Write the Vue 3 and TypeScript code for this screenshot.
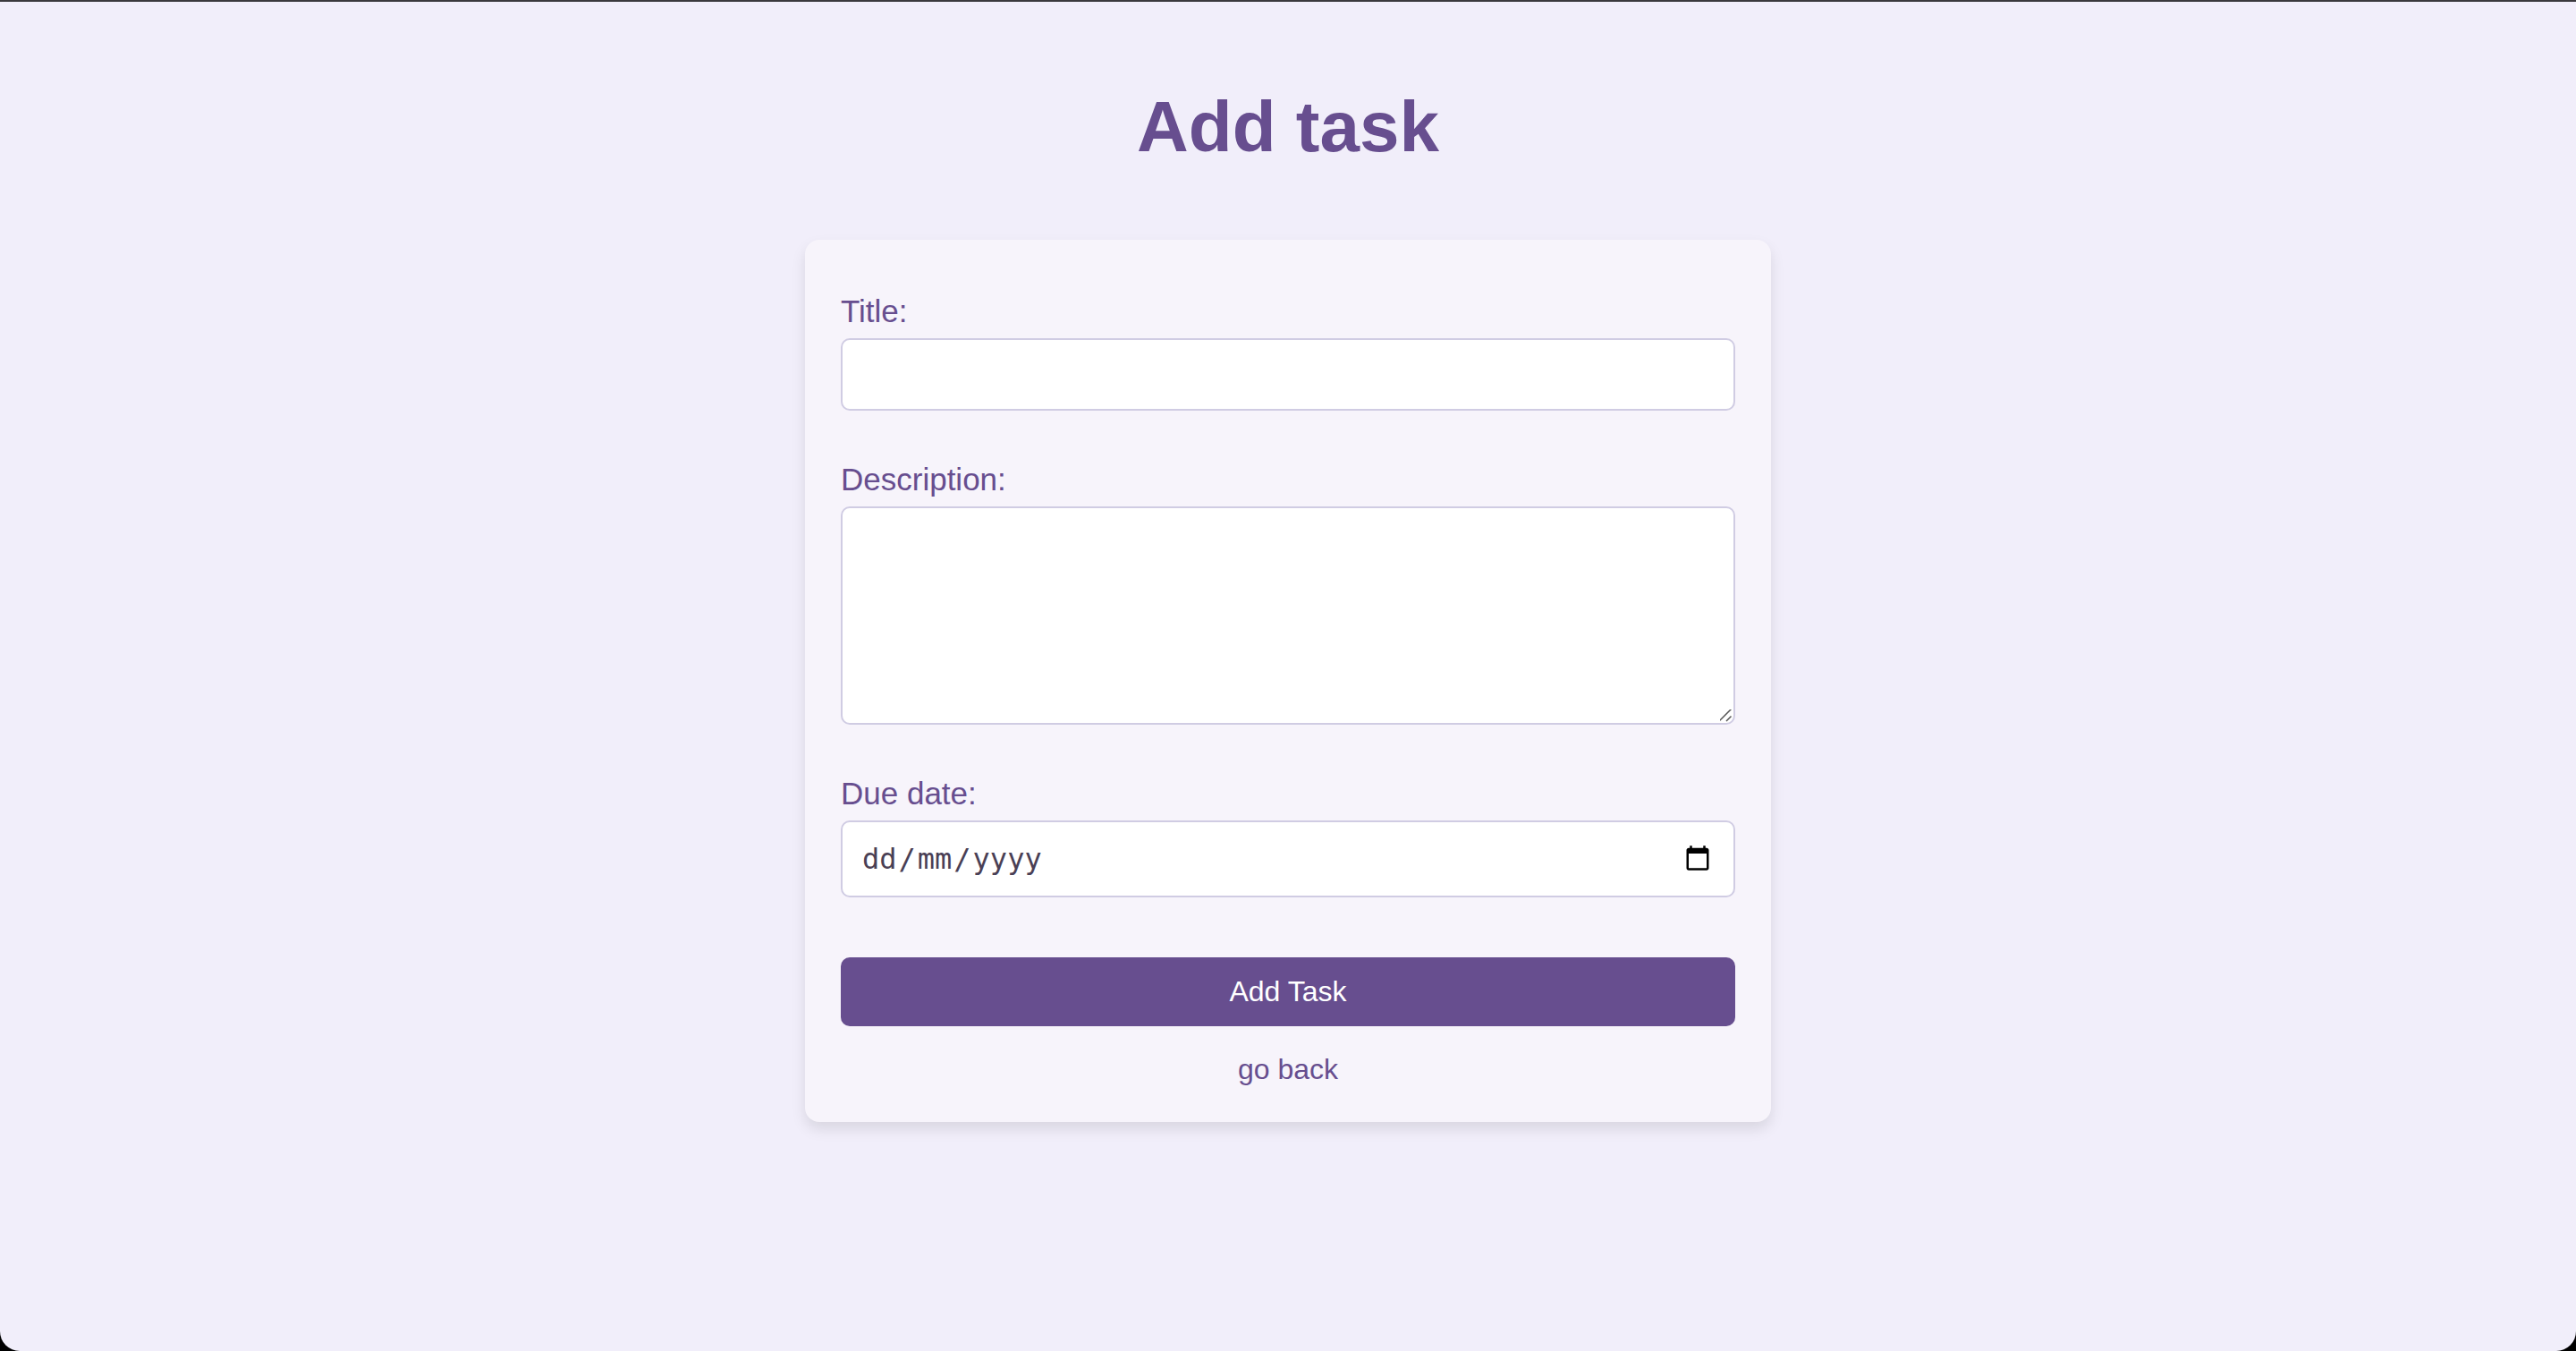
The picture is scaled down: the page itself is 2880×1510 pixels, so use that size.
<script setup lang="ts">
import { ref } from 'vue'

const title = ref('')
const description = ref('')
const dueDate = ref('')

function addTask(): void {
  title.value = ''
  description.value = ''
  dueDate.value = ''
}
</script>

<template>
  <main class="page">
    <h1 class="heading">Add task</h1>
    <form class="card" @submit.prevent="addTask">
      <div class="field">
        <label for="title">Title:</label>
        <input id="title" v-model="title" class="control" type="text" />
      </div>
      <div class="field">
        <label for="description">Description:</label>
        <textarea id="description" v-model="description" class="control area"></textarea>
      </div>
      <div class="field">
        <label for="due">Due date:</label>
        <div class="date-box">
          <input
            id="due"
            v-model="dueDate"
            class="control date"
            :class="{ empty: !dueDate }"
            type="date"
          />
          <span v-if="!dueDate" class="hint" aria-hidden="true"><span>dd</span><span>/</span><span>mm</span><span>/</span><span>yyyy</span></span>
        </div>
      </div>
      <button class="submit" type="submit">Add Task</button>
      <a class="back" href="#">go back</a>
    </form>
  </main>
</template>

<style>
body {
  margin: 0;
  background: #000;
}
</style>

<style scoped>
.page {
  box-sizing: border-box;
  min-height: 100vh;
  padding: 93px 40px 40px;
  display: flex;
  flex-direction: column;
  align-items: center;
  gap: 79px;
  border-top: 2px solid #3a393d;
  border-radius: 0 0 22px 22px;
  background: #f1eefa;
  color: #674e8f;
  font-family: "Liberation Sans", Arial, sans-serif;
}

.heading {
  margin: 0;
  font-size: 80px;
  line-height: 94px;
  font-weight: 700;
}

.card {
  box-sizing: border-box;
  width: 100%;
  max-width: 1080px;
  padding: 60px 40px 40px;
  display: flex;
  flex-direction: column;
  border-radius: 16px;
  background: #f7f4fb;
  box-shadow: 0 8px 16px rgba(0, 0, 0, 0.1);
}

.field {
  display: flex;
  flex-direction: column;
  gap: 10px;
  margin-bottom: 57px;
}

.field label {
  font-size: 35px;
  line-height: 40px;
}

.control {
  box-sizing: border-box;
  display: block;
  width: 100%;
  height: 81px;
  margin: 0;
  padding: 20px;
  border: 2px solid #d0cce3;
  border-radius: 10px;
  outline: none;
  background: #fff;
  color: #4a3f55;
  font-family: "Liberation Sans", Arial, sans-serif;
  font-size: 32px;
}

.control:focus {
  border-color: #674e8f;
}

.area {
  height: 244px;
  resize: vertical;
}

.area::-webkit-scrollbar {
  width: 20px;
  height: 20px;
}

.area::-webkit-resizer {
  background: url("data:image/svg+xml,%3Csvg xmlns='http://www.w3.org/2000/svg' width='20' height='20' viewBox='0 0 20 20'%3E%3Cpath d='M4 18L17.500 4.500M12 18L17.500 12.500' stroke='%23555' stroke-width='1.500'/%3E%3C/svg%3E") right bottom no-repeat;
}

.date-box {
  position: relative;
}

.date {
  height: 86px;
  padding-right: 22px;
  font-family: "DejaVu Sans Mono", monospace;
}

.date.empty::-webkit-datetime-edit {
  opacity: 0;
}

.hint {
  position: absolute;
  inset: 0 auto 0 24px;
  display: flex;
  align-items: center;
  gap: 2px;
  color: #4a3f55;
  font-family: "DejaVu Sans Mono", monospace;
  font-size: 32px;
  pointer-events: none;
}

.submit {
  margin: 10px 0 29px;
  padding: 20px;
  border: 0;
  border-radius: 10px;
  background: #674e8f;
  color: #fff;
  font-family: inherit;
  font-size: 32px;
  line-height: 37px;
  cursor: pointer;
}

.back {
  align-self: center;
  color: #674e8f;
  font-size: 32px;
  line-height: 38px;
  text-decoration: none;
}
</style>
